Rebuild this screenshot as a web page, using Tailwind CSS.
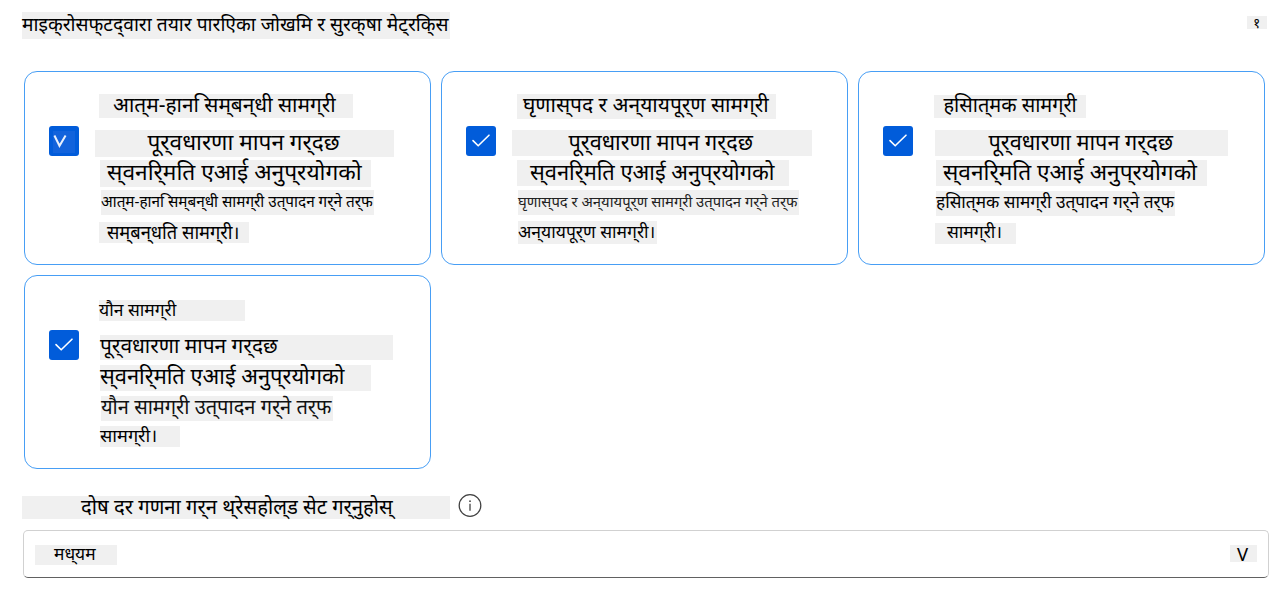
<!DOCTYPE html>
<html lang="ne">
<head>
<meta charset="utf-8">
<title>जोखिम र सुरक्षा</title>
<script src="https://cdn.jsdelivr.net/npm/@tailwindcss/browser@4"></script>
</head>
<body class="h-[591px] overflow-hidden bg-white font-['Noto_Sans',sans-serif] text-black">
<main class="flex flex-col whitespace-nowrap">
  <header class="flex h-[71px] items-start justify-between pt-3 pr-3 pl-[22px]">
    <h1 class="h-[27px] w-[428px] bg-[#f0f0f0] text-[19.23px] leading-[24px]">माइक्‌रोसफ्‌टद्‌वारा तयार पारएिका जोखमि र सुरक्‌षा मेट्‌रकि्‌स</h1>
    <span class="mt-1 h-[13px] w-5 bg-[#f0f0f0] pl-[6px] text-[14px] leading-[14px]">१</span>
  </header>

  <section class="grid grid-cols-[repeat(3,407px)] gap-[10px] pl-6">
    <article class="flex h-[194px] rounded-[13px] border border-[#479ef5]">
      <div class="mt-[54px] ml-6 flex size-[30px] shrink-0 rounded-[3px] bg-[#015cda] pt-[5px] pl-1">
        <div class="h-[22px] w-[22px] bg-[#1263dc]">
          <svg class="size-[22px]" viewBox="0 0 22 22" fill="none" stroke="#e8f0fc" stroke-width="2"><path d="M1.4 4.5 6.5 14.8 12.6 4.5"/></svg>
        </div>
      </div>
      <div class="flex flex-col pt-[22px]">
        <h2 class="ml-5 h-6 w-[254px] bg-[#f0f0f0] pl-[14px] text-[20.86px] leading-[20.4px]">आत्‌म-हान&nbsp;िसम्‌बन्‌धी सामग्‌री</h2>
        <p class="mt-3 ml-4 h-[27px] w-[299px] bg-[#f0f0f0] pl-[52.5px] text-[22.6px] leading-[23.9px]">पूर्‌वधारणा मापन गर्‌दछ</p>
        <p class="mt-[3px] ml-[21px] h-[27px] w-[271px] bg-[#f0f0f0] pl-[7px] text-[22.75px] leading-[24.4px]">स्‌वनरि्‌मति एआई अनुप्‌रयोगको</p>
        <p class="mt-[3px] ml-[22px] h-[25px] w-[273px] bg-[#f0f0f0] text-[15.3px] leading-[23.6px]">आत्‌म-हान&nbsp;िसम्‌बन्‌धी सामग्‌री उत्‌पादन गर्‌ने तर्‌फ</p>
        <p class="mt-[7px] ml-5 h-[21px] w-[150px] bg-[#f0f0f0] pl-2 text-[18.3px] leading-[19.3px]">सम्‌बन्‌धति सामग्‌री।</p>
      </div>
    </article>

    <article class="flex h-[194px] rounded-[13px] border border-[#479ef5]">
      <div class="mt-[54px] ml-6 size-[30px] shrink-0 rounded-[3px] bg-[#015cda]">
        <svg class="size-[30px]" viewBox="0 0 30 30" fill="none" stroke="#fff" stroke-width="1.6" stroke-linecap="round" stroke-linejoin="round"><path d="M7 14.6 12.2 19.8 23 9.2"/></svg>
      </div>
      <div class="flex flex-col pt-[22px]">
        <h2 class="ml-[21px] h-[25px] w-[259px] bg-[#f0f0f0] pl-[6px] text-[20.95px] leading-[21.8px]">घृणास्‌पद र अन्‌यायपूर्‌ण सामग्‌री</h2>
        <p class="mt-[11px] ml-4 h-[26px] w-[300px] bg-[#f0f0f0] pl-[56.5px] text-[21.7px] leading-[23.2px]">पूर्‌वधारणा मापन गर्‌दछ</p>
        <p class="mt-1 ml-[21px] h-[26px] w-[272px] bg-[#f0f0f0] pl-[13px] text-[21.85px] leading-[23.7px]">स्‌वनरि्‌मति एआई अनुप्‌रयोगको</p>
        <p class="mt-1 ml-[22px] h-[25px] w-[281px] bg-[#f0f0f0] text-[14.85px] leading-[22.9px] text-[#222]">घृणास्‌पद र अन्‌यायपूर्‌ण सामग्‌री उत्‌पादन गर्‌ने तर्‌फ</p>
        <p class="mt-[6px] ml-[22px] h-[23px] w-[139px] bg-[#f0f0f0] text-[17.5px] leading-[20.4px]">अन्‌यायपूर्‌ण सामग्‌री।</p>
      </div>
    </article>

    <article class="flex h-[194px] rounded-[13px] border border-[#479ef5]">
      <div class="mt-[54px] ml-6 size-[30px] shrink-0 rounded-[3px] bg-[#015cda]">
        <svg class="size-[30px]" viewBox="0 0 30 30" fill="none" stroke="#fff" stroke-width="1.6" stroke-linecap="round" stroke-linejoin="round"><path d="M7 14.6 12.2 19.8 23 9.2"/></svg>
      </div>
      <div class="flex flex-col pt-[23px]">
        <h2 class="ml-[21px] h-[23px] w-[152px] bg-[#f0f0f0] pl-[9.5px] text-[19.95px] leading-[20px]">हसिात्‌मक सामग्‌री</h2>
        <p class="mt-3 ml-[22px] h-[26px] w-[293px] bg-[#f0f0f0] pl-[53.5px] text-[21.7px] leading-[23.2px]">पूर्‌वधारणा मापन गर्‌दछ</p>
        <p class="mt-1 ml-[23px] h-[26px] w-[271px] bg-[#f0f0f0] pl-[7px] text-[22.7px] leading-[23.8px]">स्‌वनरि्‌मति एआई अनुप्‌रयोगको</p>
        <p class="mt-[5px] ml-[23px] h-[25px] w-[239px] bg-[#f0f0f0] text-[17.3px] leading-[22.8px]">हसिात्‌मक सामग्‌री उत्‌पादन गर्‌ने तर्‌फ</p>
        <p class="mt-[7px] ml-[22px] h-[21px] w-[81px] bg-[#f0f0f0] pl-3 text-[17.5px] leading-[17.9px]">सामग्‌री।</p>
      </div>
    </article>

    <article class="flex h-[194px] rounded-[13px] border border-[#479ef5]">
      <div class="mt-[54px] ml-6 size-[30px] shrink-0 rounded-[3px] bg-[#015cda]">
        <svg class="size-[30px]" viewBox="0 0 30 30" fill="none" stroke="#fff" stroke-width="1.6" stroke-linecap="round" stroke-linejoin="round"><path d="M7 14.6 12.2 19.8 23 9.2"/></svg>
      </div>
      <div class="flex flex-col pt-6">
        <h2 class="ml-5 h-[21px] w-[146px] bg-[#f0f0f0] text-[17.5px] leading-[18px]">यौन सामग्‌री</h2>
        <p class="mt-[14px] ml-[21px] h-[25px] w-[293px] bg-[#f0f0f0] text-[20.9px] leading-[21.5px]">पूर्‌वधारणा मापन गर्‌दछ</p>
        <p class="mt-[5px] ml-[21px] h-[26px] w-[271px] bg-[#f0f0f0] text-[21.85px] leading-[21.7px]">स्‌वनरि्‌मति एआई अनुप्‌रयोगको</p>
        <p class="mt-[5px] ml-[22px] h-[25px] w-[232px] bg-[#f0f0f0] text-[20.05px] leading-[21.1px] text-[#111]">यौन सामग्‌री उत्‌पादन गर्‌ने तर्‌फ</p>
        <p class="mt-[5px] ml-[21px] h-[21px] w-[80px] bg-[#f0f0f0] text-[18.2px] leading-[19.9px]">सामग्‌री।</p>
      </div>
    </article>
  </section>

  <section class="pl-[22px]">
    <div class="mt-[25px] flex h-6 items-start gap-2">
      <label class="mt-[2px] h-[23px] w-[428px] bg-[#f0f0f0] pl-[59px] text-[20.25px] leading-[21px]">दोष दर गणना गर्‌न थ्‌रेसहोल्‌ड सेट गर्‌नुहोस्</label>
      <svg class="size-6" viewBox="0 0 24 24" fill="none" stroke="#424242" stroke-width="1.3"><circle cx="12" cy="11.5" r="10.8"/><path d="M12 9.8v7"/><circle cx="12" cy="7.2" r="0.9" fill="#424242" stroke="none"/></svg>
    </div>
    <div class="mt-[12px] ml-px flex h-12 w-[1246px] justify-between rounded-[5px] border border-[#d1d1d1] border-b-[#616161] pt-[14px] pr-[11px] pl-[11px]">
      <span class="h-5 w-[82px] bg-[#f0f0f0] pl-[19px] text-[17.4px] leading-[17.4px]">मध्‌यम</span>
      <span class="h-[17px] w-[27px] bg-[#f0f0f0] pl-[7px] text-[18.5px] leading-[18.4px]">V</span>
    </div>
  </section>
</main>
</body>
</html>
